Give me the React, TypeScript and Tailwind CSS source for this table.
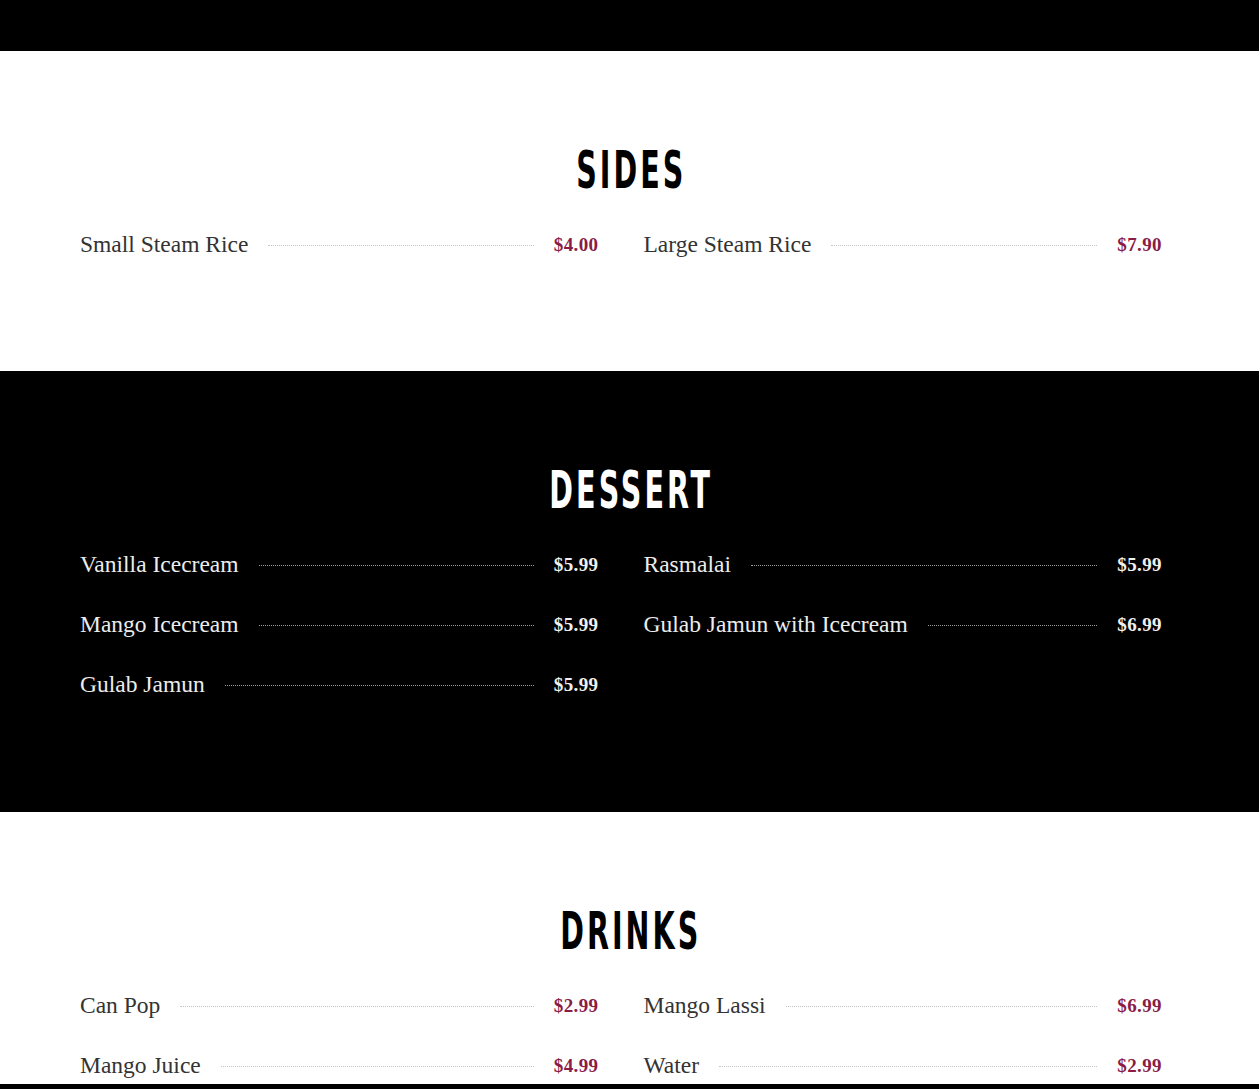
import React from "react";

type Item = { name: string; price: string };

const serif = { fontFamily: '"Liberation Serif", "Times New Roman", serif' };
const headFont = {
  fontFamily: '"DejaVu Sans Condensed", "DejaVu Sans", "Liberation Sans", sans-serif',
};

function Row({ item, dark }: { item: Item; dark: boolean }) {
  return (
    <div className="flex h-[60px] items-center pt-[2px]">
      <span
        className={`whitespace-nowrap text-[23.5px] ${dark ? "text-[#ececec]" : "text-[#333333]"}`}
        style={serif}
      >
        {item.name}
      </span>
      <span
        className={`mx-[20px] flex-1 border-t border-dotted ${dark ? "border-[#9a9a9a]" : "border-[#c4c4c4]"}`}
      />
      <span
        className={`whitespace-nowrap text-[19px] font-bold tracking-[0.4px] ${dark ? "text-[#f0f0f0]" : "text-[#8a1c45]"}`}
        style={serif}
      >
        {item.price}
      </span>
    </div>
  );
}

function Section({
  title,
  left,
  right,
  dark,
}: {
  title: string;
  left: Item[];
  right: Item[];
  dark: boolean;
}) {
  return (
    <section className={`${dark ? "bg-black pb-[98px]" : "bg-white pb-[97px]"} pt-[89px]`}>
      <h2
        className={`flex h-[60px] items-center justify-center text-[52px] font-bold uppercase ${dark ? "text-white" : "text-black"}`}
        style={headFont}
      >
        <span className="inline-block scale-x-[0.61] tracking-[5px] pl-[5px]">{title}</span>
      </h2>
      <div className="mt-[14px] grid grid-cols-2 gap-x-[45px] pl-[80px] pr-[97px]">
        <div>
          {left.map((it) => (
            <Row key={it.name} item={it} dark={dark} />
          ))}
        </div>
        <div>
          {right.map((it) => (
            <Row key={it.name} item={it} dark={dark} />
          ))}
        </div>
      </div>
    </section>
  );
}

export default function App() {
  return (
    <div className="min-h-screen bg-white">
      <div className="h-[51px] bg-black" />
      <Section
        title="Sides"
        dark={false}
        left={[{ name: "Small Steam Rice", price: "$4.00" }]}
        right={[{ name: "Large Steam Rice", price: "$7.90" }]}
      />
      <Section
        title="Dessert"
        dark={true}
        left={[
          { name: "Vanilla Icecream", price: "$5.99" },
          { name: "Mango Icecream", price: "$5.99" },
          { name: "Gulab Jamun", price: "$5.99" },
        ]}
        right={[
          { name: "Rasmalai", price: "$5.99" },
          { name: "Gulab Jamun with Icecream", price: "$6.99" },
        ]}
      />
      <Section
        title="Drinks"
        dark={false}
        left={[
          { name: "Can Pop", price: "$2.99" },
          { name: "Mango Juice", price: "$4.99" },
        ]}
        right={[
          { name: "Mango Lassi", price: "$6.99" },
          { name: "Water", price: "$2.99" },
        ]}
      />
      <div className="fixed bottom-0 left-0 right-0 h-[5px] bg-black" />
    </div>
  );
}
